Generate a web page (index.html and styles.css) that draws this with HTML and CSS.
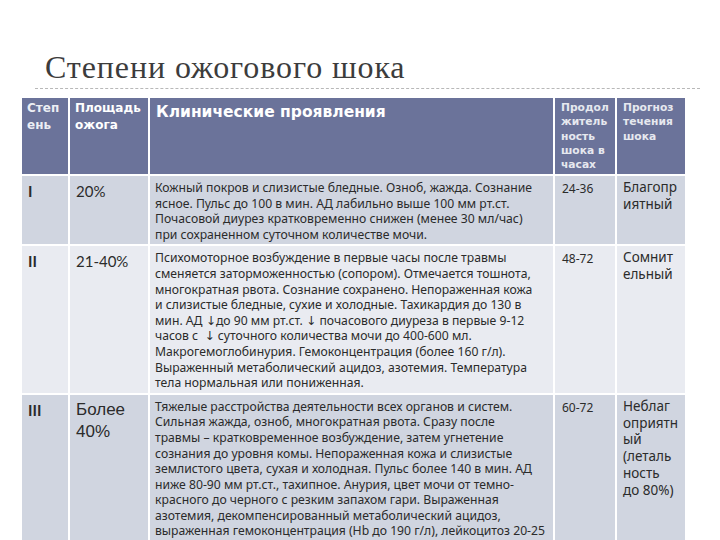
FILE: index.html
```html
<!DOCTYPE html>
<html lang="ru">
<head>
<meta charset="utf-8">
<title>Степени ожогового шока</title>
<link rel="stylesheet" href="styles.css">
</head>
<body>
<div class="slide">
  <div class="title-bar">
    <h1 class="title">Степени ожогового шока</h1>
  </div>
  <table class="shock">
    <colgroup>
      <col class="c1"><col class="c2"><col class="c3"><col class="c4"><col class="c5">
    </colgroup>
    <thead>
      <tr class="head">
        <th class="h-first">Степ<br>ень</th>
        <th class="h-mid">Площадь<br>ожога</th>
        <th class="h-big">Клинические проявления</th>
        <th class="h-small">Продол<br>житель<br>ность<br>шока в<br>часах</th>
        <th class="h-small">Прогноз<br>течения<br>шока</th>
      </tr>
    </thead>
    <tbody>
      <tr class="row dark r1">
        <td class="deg">I</td>
        <td class="area">20%</td>
        <td class="desc"><span class="ln">Кожный покров и слизистые бледные. Озноб, жажда. Сознание</span><span class="ln">ясное. Пульс до 100 в мин. АД лабильно выше 100 мм рт.ст.</span><span class="ln">Почасовой диурез кратковременно снижен (менее 30 мл/час)</span><span class="ln">при сохраненном суточном количестве мочи.</span></td>
        <td class="dur">24-36</td>
        <td class="prog">Благопр<br>иятный</td>
      </tr>
      <tr class="row light r2">
        <td class="deg">II</td>
        <td class="area">21-40%</td>
        <td class="desc"><span class="ln">Психомоторное возбуждение в первые часы после травмы</span><span class="ln">сменяется заторможенностью (сопором). Отмечается тошнота,</span><span class="ln">многократная рвота. Сознание сохранено. Непораженная кожа</span><span class="ln">и слизистые бледные, сухие и холодные. Тахикардия до 130 в</span><span class="ln">мин. АД ↓до 90 мм рт.ст. ↓ почасового диуреза в первые 9-12</span><span class="ln">часов с &nbsp;↓ суточного количества мочи до 400-600 мл.</span><span class="ln">Макрогемоглобинурия. Гемоконцентрация (более 160 г/л).</span><span class="ln">Выраженный метаболический ацидоз, азотемия. Температура</span><span class="ln">тела нормальная или пониженная.</span></td>
        <td class="dur">48-72</td>
        <td class="prog">Сомнит<br>ельный</td>
      </tr>
      <tr class="row dark r3">
        <td class="deg">III</td>
        <td class="area area-text">Более<br>40%</td>
        <td class="desc"><span class="ln">Тяжелые расстройства деятельности всех органов и систем.</span><span class="ln">Сильная жажда, озноб, многократная рвота. Сразу после</span><span class="ln">травмы – кратковременное возбуждение, затем угнетение</span><span class="ln">сознания до уровня комы. Непораженная кожа и слизистые</span><span class="ln">землистого цвета, сухая и холодная. Пульс более 140 в мин. АД</span><span class="ln">ниже 80-90 мм рт.ст., тахипное. Анурия, цвет мочи от темно-</span><span class="ln">красного до черного с резким запахом гари. Выраженная</span><span class="ln">азотемия, декомпенсированный метаболический ацидоз,</span><span class="ln">выраженная гемоконцентрация (Нb до 190 г/л), лейкоцитоз 20-25</span><span class="ln">тыс. в мкл.</span></td>
        <td class="dur">60-72</td>
        <td class="prog">Неблаг<br>оприятн<br>ый<br>(леталь<br>ность<br>до 80%)</td>
      </tr>
    </tbody>
  </table>
</div>
</body>
</html>
```
FILE: styles.css
```css
html, body {
  margin: 0;
  padding: 0;
  background: #ffffff;
  overflow: hidden;
}
.slide {
  width: 720px;
  height: 540px;
  overflow: hidden;
}
.title-bar {
  margin: 48px 20px 0 35px;
  border-bottom: 1px dashed #b8b8b8;
  height: 40px;
}
.title {
  margin: 0;
  padding-left: 10px;
  font-family: "Liberation Serif", "DejaVu Serif", serif;
  font-weight: normal;
  font-size: 32px;
  letter-spacing: 0.9px;
  line-height: 38px;
  color: #3c3c3c;
}
.shock {
  margin: 7px 0 0 20px;
  border-collapse: collapse;
  table-layout: fixed;
  width: 665px;
}
.c1 { width: 48px; }
.c2 { width: 80px; }
.c3 { width: 405px; }
.c4 { width: 62px; }
.c5 { width: 70px; }
.shock th, .shock td {
  border: 2px solid #ffffff;
  vertical-align: top;
  text-align: left;
  padding: 0;
}
.head {
  background: #6b739a;
  height: 78px;
}
.head th {
  color: #ffffff;
  font-family: "DejaVu Sans", "Liberation Sans", sans-serif;
  font-weight: bold;
}
.h-first {
  font-size: 12px;
  line-height: 16.5px;
  padding: 2px 2px 0 5px !important;
  color: #eceef4 !important;
}
.h-mid {
  font-size: 12px;
  line-height: 16.5px;
  padding: 2px 2px 0 5px !important;
}
.h-small {
  font-size: 10.7px;
  line-height: 14.3px;
  padding: 3px 2px 0 6px !important;
  color: #e6e8ef !important;
}
.h-big {
  font-size: 15.5px;
  line-height: 20px;
  padding: 4px 4px 0 6px !important;
}
.dark { background: #d0d5e0; }
.light { background: #e9ebf1; }
.r1 { height: 70px; }
.r2 { height: 147px; }
.row td {
  color: #2b2b2b;
}
.deg, .area {
  font-family: "Lato", "Open Sans", sans-serif;
  font-size: 15px;
  line-height: 22px;
  padding: 4px 2px 0 6px !important;
}
.deg {
  font-weight: bold;
}
.area-text {
  font-family: "Liberation Sans", Arial, sans-serif;
  font-size: 17px;
  line-height: 22px;
}
.desc {
  font-family: "Noto Sans", "DejaVu Sans", sans-serif;
  font-size: 12.2px;
  line-height: 15.6px;
  padding: 4px 2px 2px 5px !important;
}
.ln {
  display: block;
  white-space: nowrap;
}
.dur {
  font-family: "Noto Sans", "DejaVu Sans", sans-serif;
  font-size: 12px;
  line-height: 17px;
  padding: 4px 2px 0 7px !important;
}
.prog {
  font-family: "Noto Sans", "DejaVu Sans", sans-serif;
  font-size: 13.5px;
  line-height: 16.8px;
  padding: 3px 2px 0 6px !important;
  white-space: nowrap;
}
```
